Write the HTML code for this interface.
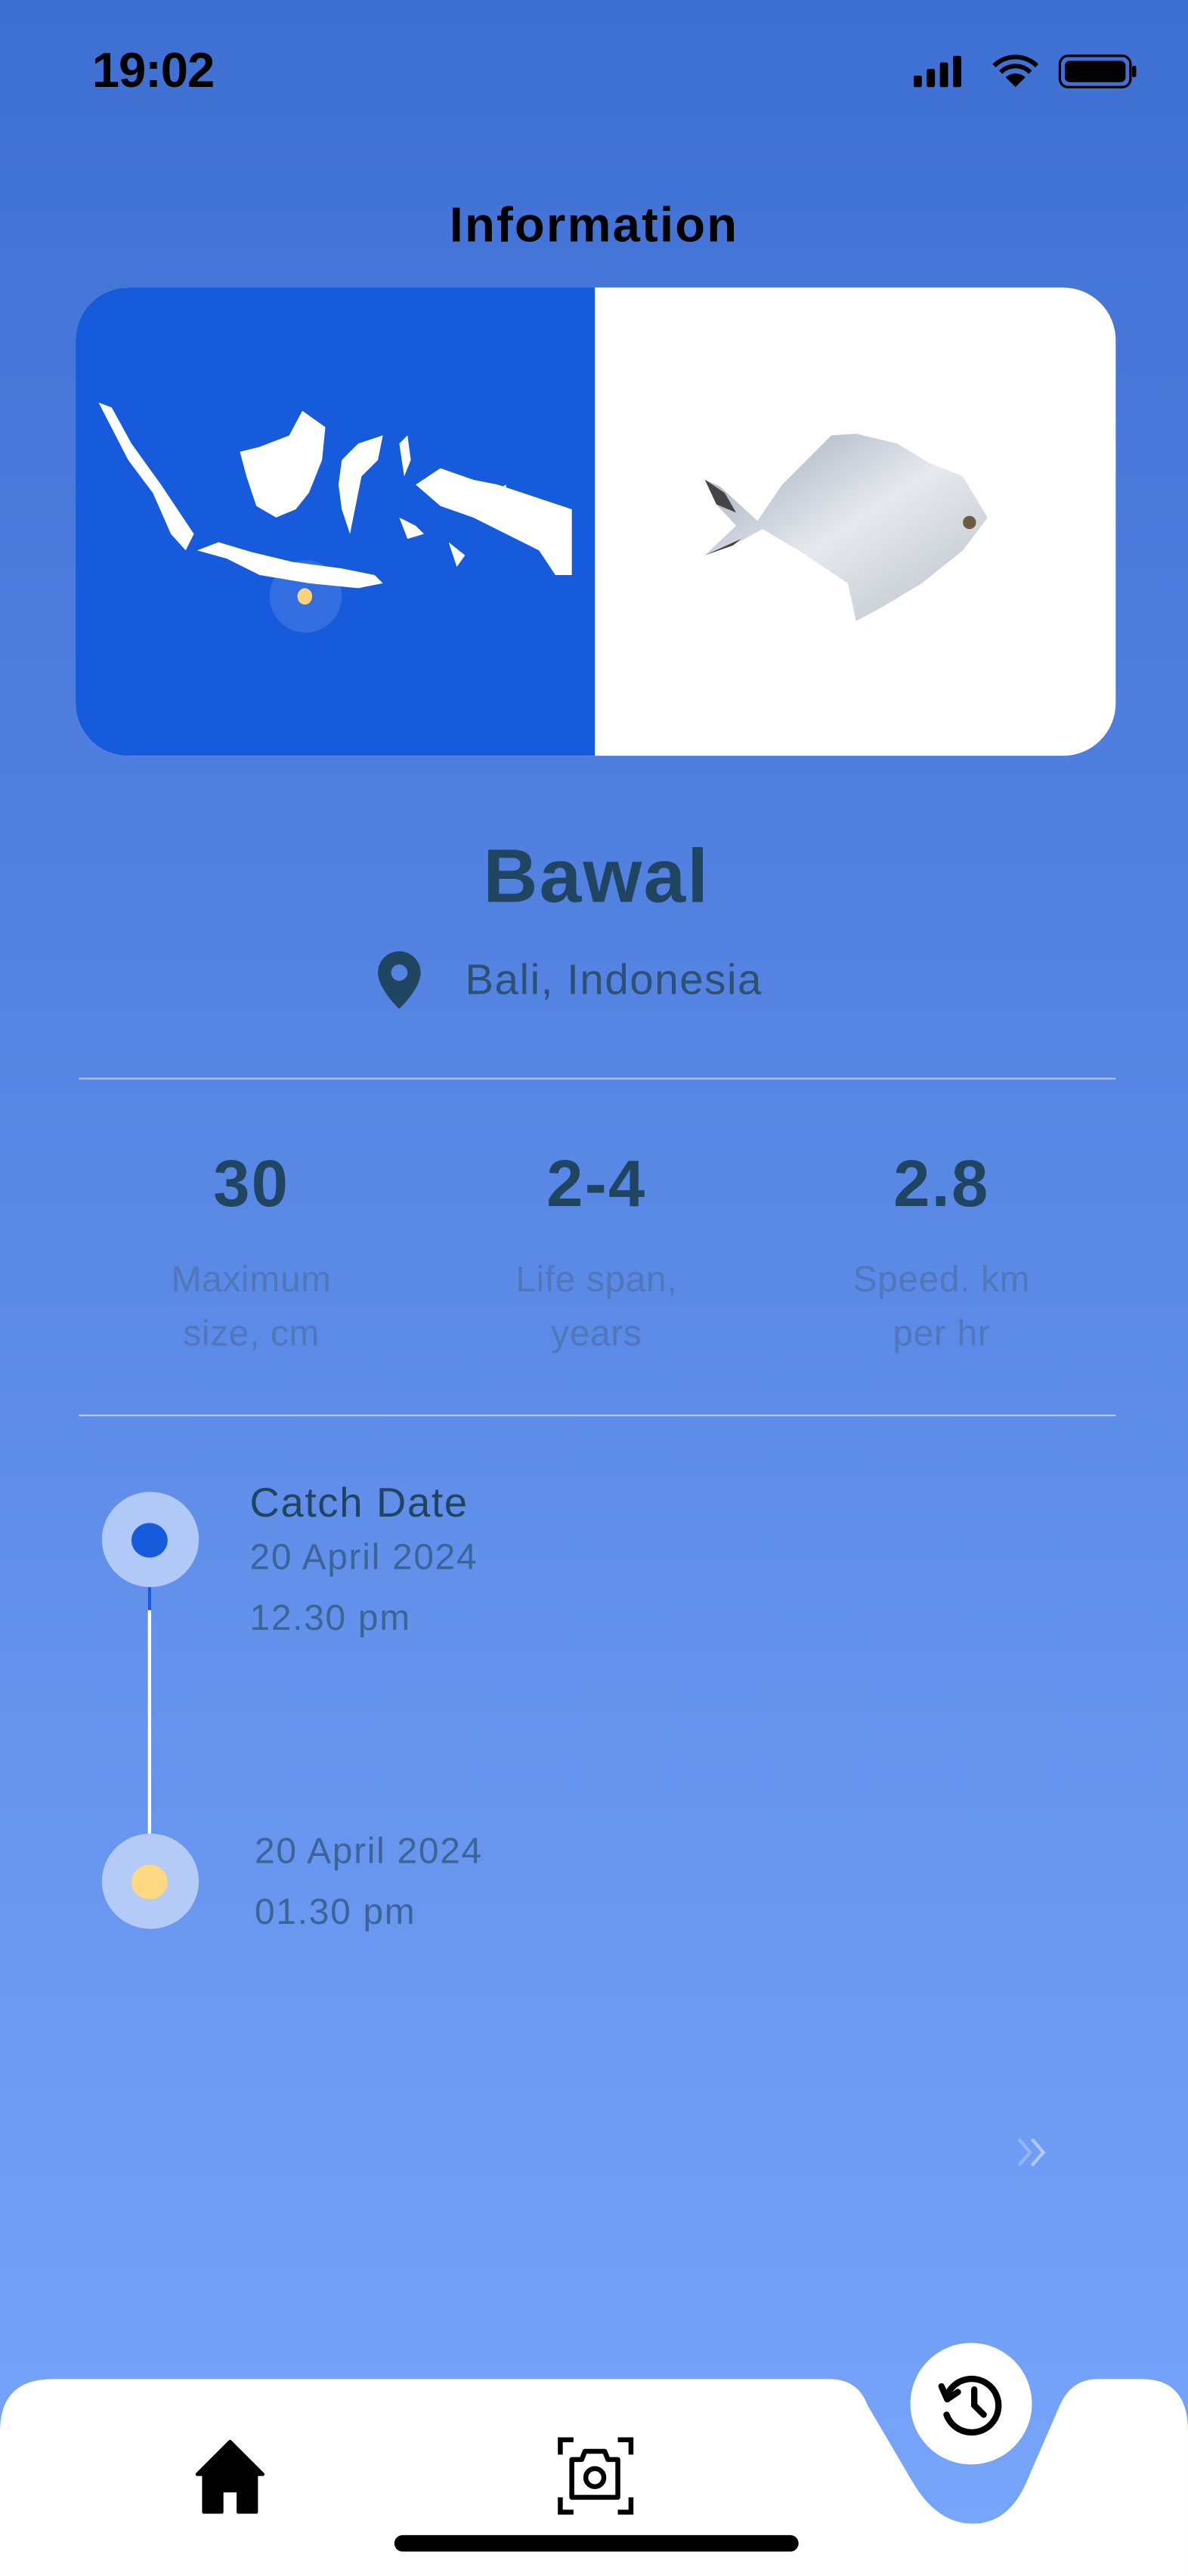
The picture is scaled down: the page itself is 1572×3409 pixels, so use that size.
<!DOCTYPE html>
<html><head><meta charset="utf-8"><style>
html,body{margin:0;padding:0;}
body{width:1572px;height:3408px;overflow:hidden;background:#5a8ae6;}
#s{position:absolute;left:0;top:0;width:723px;height:1568px;transform:scale(2.17427);transform-origin:0 0;
background:linear-gradient(180deg,#3e70d3 0%,#5584e2 40%,#6a98f0 75%,#78a6fb 100%);font-family:"Liberation Sans",sans-serif;overflow:hidden;}
.a{position:absolute;}
.c{text-align:center;}
</style></head><body><div id="s">
<div class="a" style="left:56px;top:27px;font-size:30px;font-weight:bold;color:#000;letter-spacing:-0.5px">19:02</div>
<svg class="a" style="left:556px;top:32px" width="136" height="24" viewBox="0 0 136 24">
<rect x="0" y="14" width="5" height="7" rx="1"/><rect x="8" y="10" width="5" height="11" rx="1"/><rect x="16" y="6" width="5" height="15" rx="1"/><rect x="24" y="2" width="5" height="19" rx="1"/>
<path d="M62 21 L56 15 A9 9 0 0 1 68 15 Z M52 11 A14 14 0 0 1 72 11 L70 13 A11 11 0 0 0 54 13 Z M48 7 A20 20 0 0 1 76 7 L74 9 A17 17 0 0 0 50 9 Z"/>
<rect x="89" y="2" width="43" height="19" rx="5" fill="none" stroke="#000" stroke-width="1.5"/><rect x="92" y="5" width="37" height="13" rx="3"/><rect x="133" y="8" width="2.5" height="7" rx="1"/>
</svg>
<div class="a c" style="left:0;width:723px;top:121px;font-size:30px;font-weight:bold;color:#000;letter-spacing:1px">Information</div>
<div class="a" style="left:46px;top:175px;width:633px;height:285px;border-radius:32px;overflow:hidden;background:#fff">
<div class="a" style="left:0;top:0;width:316px;height:285px;background:#165bdc"></div>
<svg class="a" style="left:12px;top:65px" width="295" height="135" viewBox="0 0 295 135" fill="#fff">
<path d="M2 5 L10 8 L22 30 L40 55 L50 70 L60 85 L55 95 L46 85 L35 60 L20 40 Z"/>
<path d="M62 95 L80 100 L100 110 L130 115 L160 118 L175 115 L170 110 L150 106 L120 102 L95 96 L75 90 Z"/>
<path d="M88 35 L100 32 L118 25 L126 10 L140 20 L138 40 L130 60 L122 70 L110 75 L98 68 L92 50 Z"/>
<path d="M150 40 L160 30 L175 25 L172 40 L162 50 L158 70 L155 85 L150 70 L148 55 Z"/>
<path d="M185 75 L195 80 L200 85 L190 88 Z M215 90 L225 98 L220 105 Z"/>
<path d="M195 55 L210 45 L230 52 L245 55 L260 60 L290 70 L290 110 L280 110 L270 95 L250 85 L230 75 L210 68 Z"/>
<path d="M185 30 L190 25 L192 40 L188 50 Z M240 60 L250 55 L250 65 Z"/>
</svg>
<div class="a" style="left:118px;top:166px;width:44px;height:44px;border-radius:50%;background:rgba(255,255,255,0.12)"></div>
<div class="a" style="left:135px;top:183px;width:9px;height:10px;border-radius:50%;background:#fdd27a"></div>
<svg class="a" style="left:380px;top:85px" width="180" height="120" viewBox="0 0 180 120">
<defs><linearGradient id="f" x1="0" y1="0" x2="1" y2="1"><stop offset="0" stop-color="#9aa6b6"/><stop offset="0.5" stop-color="#e6e9ee"/><stop offset="1" stop-color="#b9c0c9"/></linearGradient></defs>
<path d="M3 32 L12 36 L35 57 L50 35 L70 15 L80 5 L95 4 L120 10 L140 22 L160 30 L175 55 L160 75 L135 95 L110 110 L95 118 L90 95 L60 75 L38 62 L20 72 L3 78 L22 60 L10 47 Z" fill="url(#f)"/>
<path d="M3 32 L15 40 L22 52 L10 47 Z M3 78 L20 72 L25 68 Z" fill="#444"/>
<circle cx="164" cy="58" r="4" fill="#6b5c3f"/>
</svg>
</div>
<div class="a c" style="left:0;width:726px;top:506px;font-size:46px;font-weight:bold;color:#1f4560;letter-spacing:1px">Bawal</div>
<svg class="a" style="left:229px;top:579px" width="28" height="35" viewBox="0 0 28 35"><path d="M14 0 A13 13 0 0 0 1 13 C1 23 14 35 14 35 C14 35 27 23 27 13 A13 13 0 0 0 14 0 Z M14 8 A5 5 0 1 1 14 18 A5 5 0 1 1 14 8 Z" fill="#1f4560" fill-rule="evenodd"/></svg>
<div class="a" style="left:283px;top:581px;font-size:26px;color:#2c5175;letter-spacing:0.7px">Bali, Indonesia</div>
<div class="a" style="left:48px;top:656px;width:631px;height:1px;background:rgba(255,255,255,0.55)"></div>
<div class="a c" style="left:53px;width:200px;top:699px;font-size:40px;font-weight:bold;color:#1f4560;letter-spacing:1px">30</div>
<div class="a c" style="left:263px;width:200px;top:699px;font-size:40px;font-weight:bold;color:#1f4560;letter-spacing:1px">2-4</div>
<div class="a c" style="left:473px;width:200px;top:699px;font-size:40px;font-weight:bold;color:#1f4560;letter-spacing:1px">2.8</div>
<div class="a c" style="left:53px;width:200px;top:762px;font-size:22px;line-height:33px;color:#4f77b9;letter-spacing:0.3px">Maximum<br>size, cm</div>
<div class="a c" style="left:263px;width:200px;top:762px;font-size:22px;line-height:33px;color:#4f77b9;letter-spacing:0.3px">Life span,<br>years</div>
<div class="a c" style="left:473px;width:200px;top:762px;font-size:22px;line-height:33px;color:#4f77b9;letter-spacing:0.3px">Speed. km<br>per hr</div>
<div class="a" style="left:48px;top:861px;width:631px;height:1px;background:rgba(255,255,255,0.55)"></div>
<div class="a" style="left:90px;top:966px;width:2px;height:150px;background:#fff"></div>
<div class="a" style="left:90px;top:966px;width:2px;height:14px;background:#165bdc"></div>
<div class="a" style="left:62px;top:908px;width:59px;height:58px;border-radius:50%;background:#b1c9f6"></div>
<div class="a" style="left:80px;top:927px;width:22px;height:21px;border-radius:50%;background:#165bdc"></div>
<div class="a" style="left:62px;top:1116px;width:59px;height:58px;border-radius:50%;background:#b4cbf7"></div>
<div class="a" style="left:80px;top:1135px;width:22px;height:21px;border-radius:50%;background:#fed982"></div>
<div class="a" style="left:152px;top:901px;font-size:25px;color:#1f4560;letter-spacing:0.8px">Catch Date</div>
<div class="a" style="left:152px;top:935px;font-size:22px;color:#3c6597;letter-spacing:0.8px">20 April 2024</div>
<div class="a" style="left:152px;top:972px;font-size:22px;color:#3c6597;letter-spacing:0.8px">12.30 pm</div>
<div class="a" style="left:155px;top:1114px;font-size:22px;color:#3c6597;letter-spacing:0.8px">20 April 2024</div>
<div class="a" style="left:155px;top:1151px;font-size:22px;color:#3c6597;letter-spacing:0.8px">01.30 pm</div>
<svg class="a" style="left:617px;top:1300px" width="22" height="20" viewBox="0 0 22 20" fill="none" stroke-width="2"><path d="M3 2 L10 10 L3 18" stroke="rgba(255,255,255,0.25)"/><path d="M11 2 L18 10 L11 18" stroke="rgba(255,255,255,0.45)"/></svg>
<svg class="a" style="left:0;top:1440px" width="723" height="128" viewBox="0 0 723 128">
<path d="M0 40 Q0 8 32 8 L505 8 Q522 8 528 24 L555 70 Q570 96 592 96 Q614 96 625 70 L645 24 Q652 8 668 8 L695 8 Q723 8 723 40 L723 128 L0 128 Z" fill="#fff"/>
</svg>
<div class="a" style="left:554px;top:1426px;width:74px;height:74px;border-radius:50%;background:#fff"></div>
<svg class="a" style="left:568px;top:1440px" width="46" height="46" viewBox="0 0 24 24"><path d="M4.5 9 A8.5 8.5 0 1 1 4.2 15.5" fill="none" stroke="#000" stroke-width="2" stroke-linecap="round"/><path d="M2.6 6.5 L4.4 10.6 L7.8 8.3" fill="none" stroke="#000" stroke-width="2" stroke-linecap="round" stroke-linejoin="round"/><path d="M13 7.5 V12.5 L16 15.5" fill="none" stroke="#000" stroke-width="2" stroke-linecap="round"/></svg>
<svg class="a" style="left:119px;top:1484px" width="42" height="46" viewBox="0 0 42 46"><path d="M21 2 L41 22 L37 22 L37 45 L26 45 L26 32 L16 32 L16 45 L5 45 L5 22 L1 22 Z" fill="#000" stroke="#000" stroke-width="2" stroke-linejoin="round"/></svg>
<svg class="a" style="left:339px;top:1483px" width="47" height="48" viewBox="0 0 47 48" fill="none" stroke="#000" stroke-width="3">
<path d="M2 11 V2 H10 M37 2 H45 V11 M2 37 V46 H10 M37 46 H45 V37"/>
<path d="M9 14 H15 L17 9 H29 L31 14 H37 V37 H9 Z" stroke-linejoin="round"/><circle cx="23" cy="25" r="5.5"/>
</svg>
<div class="a" style="left:240px;top:1543px;width:246px;height:10px;border-radius:5px;background:#000"></div>
</div></body></html>
